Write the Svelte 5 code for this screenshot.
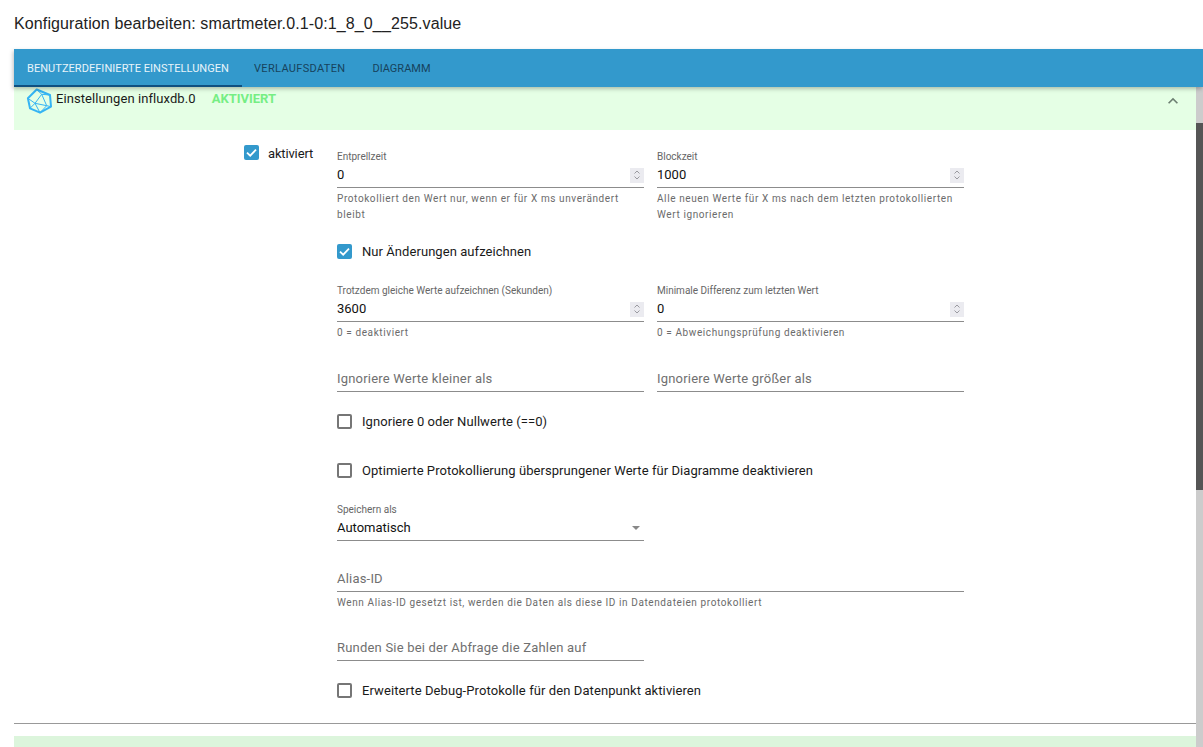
<script>
  const tabs = ['Benutzerdefinierte Einstellungen', 'Verlaufsdaten', 'Diagramm'];
</script>

{#snippet box(checked)}
  <span class="box" class:checked>
    {#if checked}
      <svg viewBox="0 0 16 16" width="15" height="15"><path d="M3.2 8.2 6.6 11.4 12.8 4.9" fill="none" stroke="#fff" stroke-width="1.9"/></svg>
    {/if}
  </span>
{/snippet}

{#snippet num(label, value, help)}
  <div class="field">
    <div class="small">{label}</div>
    <div class="input">
      <span class="val">{value}</span>
      <span class="spin">
        <svg viewBox="0 0 12 14" width="12" height="14"><path d="M3.5 5.5 6 3l2.5 2.5M3.5 8.5 6 11l2.5-2.5" fill="none" stroke="#9a9aa0" stroke-width="1"/></svg>
      </span>
    </div>
    <div class="help">{help}</div>
  </div>
{/snippet}

{#snippet empty(label)}
  <div class="field">
    <div class="input plain"><span class="ph">{label}</span></div>
  </div>
{/snippet}

<div class="page">
  <h1>Konfiguration bearbeiten: smartmeter.0.1-0:1_8_0__255.value</h1>

  <div class="tabs">
    {#each tabs as t, i}
      <div class="tab" class:active={i === 0}>{t}</div>
    {/each}
  </div>

  <div class="body">
    <div class="scroll">
      <div class="summary">
        <svg class="logo" viewBox="0 0 26 26" width="26" height="26">
          <g fill="none" stroke="#35b4f4" stroke-linejoin="round">
            <path stroke-width="2" d="M9.7 1.5 23 7 24 18.7 13 24.7 3 20.3 .9 10.3Z"/>
            <path stroke-width="1" d="M14.7 6.3 8 15.3 19.7 17.7ZM14.7 6.3 9.7 1.5M14.7 6.3 23 7M8 15.3 .9 10.3M8 15.3 3 20.3M8 15.3 13 24.7M19.7 17.7 24 18.7M19.7 17.7 13 24.7"/>
          </g>
        </svg>
        <span class="sum-title">Einstellungen influxdb.0</span>
        <span class="status">AKTIVIERT</span>
        <svg class="chev" viewBox="0 0 20 20" width="20" height="20"><path d="M10 6.67l-5 5 1.18 1.18L10 9.03l3.82 3.82L15 11.67z" fill="#6d7f72"/></svg>
      </div>

      <div class="detail">
        <label class="enable">
          {@render box(true)}
          <span>aktiviert</span>
        </label>

        <div class="form">
          <div class="row r1">
            {@render num('Entprellzeit', '0', 'Protokolliert den Wert nur, wenn er für X ms unverändert bleibt')}
            {@render num('Blockzeit', '1000', 'Alle neuen Werte für X ms nach dem letzten protokollierten Wert ignorieren')}
          </div>

          <label class="check c1">{@render box(true)}<span>Nur Änderungen aufzeichnen</span></label>

          <div class="row r2">
            {@render num('Trotzdem gleiche Werte aufzeichnen (Sekunden)', '3600', '0 = deaktiviert')}
            {@render num('Minimale Differenz zum letzten Wert', '0', '0 = Abweichungsprüfung deaktivieren')}
          </div>

          <div class="row r3">
            {@render empty('Ignoriere Werte kleiner als')}
            {@render empty('Ignoriere Werte größer als')}
          </div>

          <label class="check c2">{@render box(false)}<span>Ignoriere 0 oder Nullwerte (==0)</span></label>
          <label class="check c3">{@render box(false)}<span>Optimierte Protokollierung übersprungener Werte für Diagramme deaktivieren</span></label>

          <div class="half sel">
            <div class="small">Speichern als</div>
            <div class="input">
              <span class="val">Automatisch</span>
              <span class="arrow"></span>
            </div>
          </div>

          <div class="alias">
            <div class="input plain"><span class="ph">Alias-ID</span></div>
            <div class="help">Wenn Alias-ID gesetzt ist, werden die Daten als diese ID in Datendateien protokolliert</div>
          </div>

          <div class="half round">
            <div class="input plain"><span class="ph">Runden Sie bei der Abfrage die Zahlen auf</span></div>
          </div>

          <label class="check c4">{@render box(false)}<span>Erweiterte Debug-Protokolle für den Datenpunkt aktivieren</span></label>
        </div>
      </div>

      <div class="divider"></div>
      <div class="next"></div>
    </div>
    <div class="scrollbar"><div class="thumb"></div></div>
  </div>
</div>

<style>
  :global(body) { margin: 0; background: #fff; overflow: hidden; }
  .page { width: 1203px; height: 747px; overflow: hidden; font-family: Roboto, "Liberation Sans", sans-serif; color: #1a1a1a; }
  h1 { margin: 0; height: 49px; padding: 14px 0 0 14px; box-sizing: border-box; font: 400 16px/20px "Liberation Sans", Arial, sans-serif; letter-spacing: .12px; color: #222; }

  .tabs { margin-left: 14px; height: 38px; background: #3399cc; display: flex; box-shadow: -1px 2px 4px rgba(0,0,0,.25); position: relative; z-index: 1; }
  .tab { padding: 1px 13px 0 12px; line-height: 38px; font-size: 11px; letter-spacing: .33px; text-transform: uppercase; color: #17435c; white-space: nowrap; box-sizing: border-box; height: 38px; }
  .tab:last-child { letter-spacing: 0; padding-left: 14px; }
  .tab.active { color: #e8f4fa; border-bottom: 2px solid #0f4f80; width: 228px; letter-spacing: .05px; padding-left: 13px; }

  .body { display: flex; height: 660px; }
  .scroll { flex: 1; padding-left: 14px; min-width: 0; }
  .scrollbar { width: 7px; background: #cccccc; }
  .thumb { margin-top: 36px; height: 367px; background: #555; }

  .summary { height: 43px; background: #e5ffe5; display: flex; align-items: flex-start; position: relative; }
  .logo { margin: 1px 0 0 13px; overflow: visible; }
  .sum-title { margin: 3px 0 0 3px; font-size: 13px; line-height: 18px; letter-spacing: .08px; }
  .status { margin: 3px 0 0 16px; font-size: 13px; line-height: 18px; font-weight: 700; color: #76ee84; }
  .chev { position: absolute; right: 13px; top: 4px; }

  .detail { display: flex; padding-left: 230px; }
  .enable { display: flex; align-items: flex-start; width: 93px; margin-top: 15px; font-size: 13px; line-height: 18px; letter-spacing: -.15px; }
  .enable span:last-child { margin-left: 9px; }

  .box { width: 15px; height: 15px; box-sizing: border-box; border: 2px solid #767676; border-radius: 2px; display: block; flex: none; }
  .box.checked { background: #3399cc; border: none; }
  .box svg { display: block; }

  .form { width: 627px; }
  .row { display: flex; gap: 13px; }
  .field { width: 307px; }
  .half { width: 307px; }

  .small { font-size: 10px; line-height: 12px; color: #666; }
  .input { height: 24px; border-bottom: 1px solid #8c8c8c; display: flex; align-items: center; justify-content: space-between; }
  .plain { padding-bottom: 2px; height: 22px; }
  .val { font-size: 13px; line-height: 18px; color: #111; }
  .sel .input { padding-bottom: 1px; height: 23px; }
  .ph { font-size: 13px; color: #707070; letter-spacing: .2px; }
  .spin { width: 14px; height: 15px; background: #ebebf0; display: flex; align-items: center; justify-content: center; }
  .arrow { width: 0; height: 0; border: 4.5px solid transparent; border-top-color: #888; border-bottom: 0; margin-right: 4px; }
  .help { margin-top: 3px; font-size: 10px; line-height: 16px; color: #6b6b6b; letter-spacing: .6px; }

  .check { display: flex; align-items: center; gap: 10px; font-size: 13px; line-height: 18px; letter-spacing: .06px; }
  .check .box { margin-top: -2px; }

  .r1 { margin-top: 21px; }
  .c1 { margin-top: 20px; }
  .r2 { margin-top: 24px; }
  .r3 { margin-top: 26px; }
  .c2 { margin-top: 21px; }
  .c3 { margin-top: 31px; }
  .sel { margin-top: 24px; }
  .alias { margin-top: 26px; }
  .round { margin-top: 25px; }
  .c4 { margin-top: 21px; letter-spacing: .09px; }

  .divider { height: 1px; background: #999; margin-top: 23px; }
  .next { height: 40px; margin-top: 12px; background: #dcf5dc; }
</style>
